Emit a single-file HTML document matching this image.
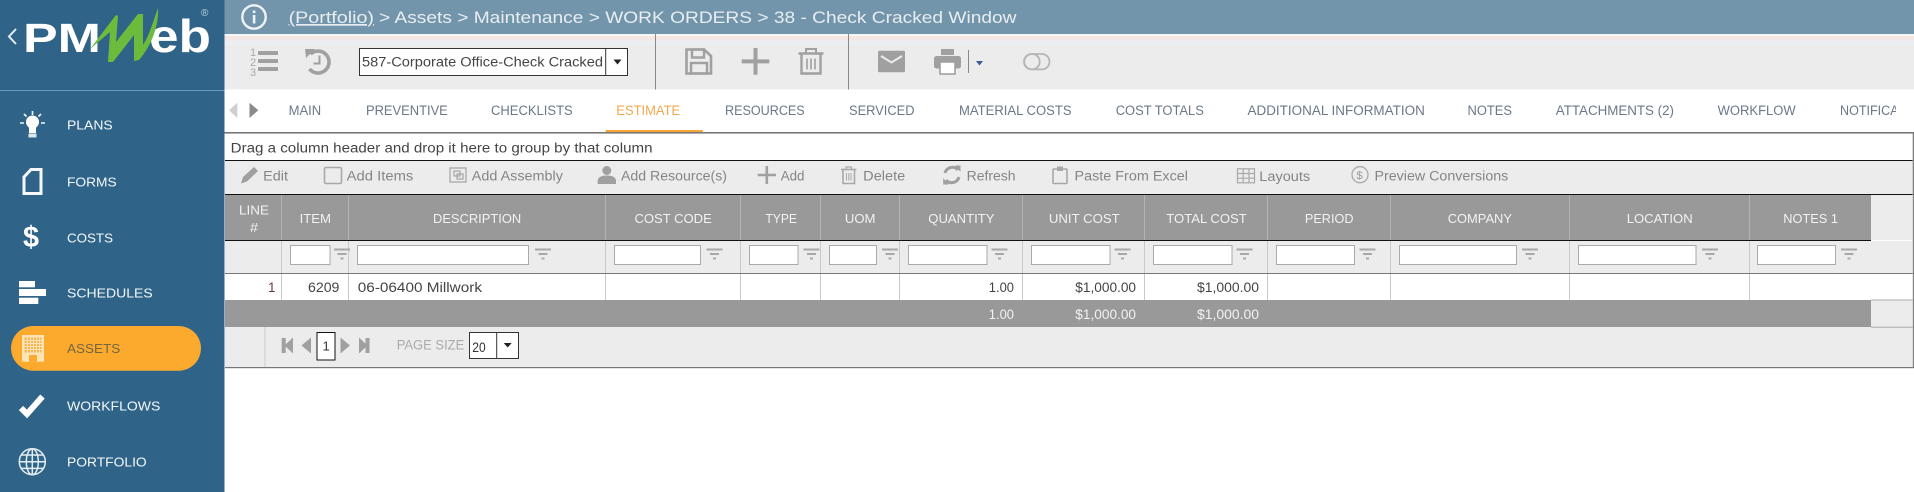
<!DOCTYPE html>
<html lang="en">
<head>
<meta charset="utf-8">
<title>PMWeb - Work Orders - Estimate</title>
<style>
html,body{margin:0;padding:0;width:1914px;height:492px;overflow:hidden;background:#fff}
svg{display:block;position:absolute;left:0;top:0}
text{font-family:"Liberation Sans",sans-serif;font-size:13.5px;white-space:pre}
.nav{fill:#f4f8fa;font-size:13px}
.tab{fill:#6a7888;font-size:13.5px}
.tb{fill:#858585;font-size:13.5px}
.h{fill:#f2f2f2;font-size:13px}
.d{fill:#444}
.ft{fill:#f2f2f2}
.in{fill:#fff;stroke:#aaa;stroke-width:1}
.dv{stroke:#c9c9c9;stroke-width:1}
.hv{stroke:#b4b4b4;stroke-width:1}
</style>
</head>
<body>
<svg width="1914" height="492" viewBox="0 0 1914 492" xmlns="http://www.w3.org/2000/svg">
<defs>
<g id="f" fill="#a8a8a8"><rect x="0" y="0" width="16" height="2"/><rect x="3.5" y="4.5" width="9" height="2"/><rect x="6.5" y="9" width="3" height="2"/></g>
<clipPath id="tabclip"><rect x="224" y="90" width="1672" height="42"/></clipPath>
</defs>

<!-- Sidebar -->
<rect x="0" y="0" width="224.5" height="492" fill="#2f6488"/>
<rect x="0" y="90" width="224.5" height="1" fill="#6a9dbd"/>
<path d="M16 29 L9 36.5 L16 44" fill="none" stroke="#e6eef3" stroke-width="2"/>
<text x="23" y="52" textLength="78" lengthAdjust="spacingAndGlyphs" style="font-size:41px;font-weight:bold;fill:#fff">PM</text>
<text x="149" y="52" textLength="62" lengthAdjust="spacingAndGlyphs" style="font-size:46px;font-weight:bold;fill:#fff">eb</text>
<path d="M90 49 L116 15 L118 16 L116 42 L138 14 L143 14 L143 45 C149 36 153 22 158 8 C159 25 152 45 139 60 L134 61 L134 35 L113 62 L108 62 L110 32 Z" fill="#6cbb3c"/>
<text x="201" y="16" style="font-size:10px;fill:#c4d4de">®</text>

<!-- Plans -->
<g fill="#fff"><circle cx="32.5" cy="122" r="6.5"/><rect x="29" y="126" width="7" height="7"/><rect x="28.5" y="133.5" width="8" height="4" fill="#dfe8ee"/></g>
<g stroke="#f2f6f8" stroke-width="1.6"><path d="M20 123h4M41 123h4M32.5 111v4M24 114l2.5 2.5M41 114l-2.5 2.5"/></g>
<text class="nav" x="67" y="129.3" textLength="45.7" lengthAdjust="spacingAndGlyphs">PLANS</text>
<!-- Forms -->
<path d="M31 169.5 H41 V193.5 H24 V177 Z" fill="none" stroke="#f4f8fa" stroke-width="3"/>
<text class="nav" x="67" y="186.3" textLength="49.7" lengthAdjust="spacingAndGlyphs">FORMS</text>
<!-- Costs -->
<text x="23" y="247" style="font-size:30px;font-weight:bold;fill:#fff" textLength="16" lengthAdjust="spacingAndGlyphs">$</text>
<text class="nav" x="67" y="242.3" textLength="46" lengthAdjust="spacingAndGlyphs">COSTS</text>
<!-- Schedules -->
<g fill="#fff"><rect x="19" y="281" width="16" height="6.3"/><rect x="19" y="289" width="27" height="7"/><rect x="19" y="297.7" width="19.3" height="6.3"/></g>
<text class="nav" x="67" y="297.3" textLength="85.7" lengthAdjust="spacingAndGlyphs">SCHEDULES</text>
<!-- Assets -->
<rect x="11" y="326" width="190" height="44.7" rx="22.3" fill="#fbaa2e"/>
<rect x="22" y="335" width="22" height="26.7" fill="#fde3b5"/>
<g fill="#f9b54f"><rect x="24.5" y="337.5" width="17" height="15"/><rect x="29" y="355" width="8" height="6.7" fill="#fbaa2e"/></g>
<g stroke="#fde3b5" stroke-width="1"><path d="M27.5 337v16M30.5 337v16M33.5 337v16M36.5 337v16M39.5 337v16M24 340.5h18M24 343.5h18M24 346.5h18M24 349.5h18"/></g>
<text x="67" y="353" textLength="53.3" lengthAdjust="spacingAndGlyphs" style="font-size:13px;fill:#75663f">ASSETS</text>
<!-- Workflows -->
<path d="M21 408 L27 414 L42.5 396.5" fill="none" stroke="#fff" stroke-width="6"/>
<text class="nav" x="67" y="410.3" textLength="93.3" lengthAdjust="spacingAndGlyphs">WORKFLOWS</text>
<!-- Portfolio -->
<g fill="none" stroke="#e4edf2" stroke-width="1.5"><circle cx="32.3" cy="461.7" r="13"/><ellipse cx="32.3" cy="461.7" rx="6" ry="13"/><path d="M32.3 448.7v26M19.3 461.7h26M21 455h22.6M21 468.4h22.6"/></g>
<text class="nav" x="67" y="466.4" textLength="79.7" lengthAdjust="spacingAndGlyphs">PORTFOLIO</text>

<!-- Top bar -->
<rect x="224.5" y="0" width="1690" height="34" fill="#7295ab"/>
<circle cx="254" cy="17" r="11.7" fill="none" stroke="#eef3f6" stroke-width="2.4"/>
<rect x="252.8" y="15" width="2.6" height="8.5" fill="#eef3f6"/><rect x="252.8" y="10.5" width="2.6" height="2.6" fill="#eef3f6"/>
<text x="288.6" y="23" textLength="85.4" lengthAdjust="spacingAndGlyphs" style="font-size:17px;fill:#e8eef2;text-decoration:underline">(Portfolio)</text>
<text x="379" y="23" textLength="637.5" lengthAdjust="spacingAndGlyphs" style="font-size:17px;fill:#e8eef2">&gt; Assets &gt; Maintenance &gt; WORK ORDERS &gt; 38 - Check Cracked Window</text>

<!-- Toolbar -->
<rect x="224.5" y="34" width="1690" height="55.5" fill="#ececec"/>
<rect x="224.5" y="34" width="1690" height="2" fill="#f6f6f6"/>
<rect x="224.5" y="36" width="1690" height="4.6" fill="#f4e8e4"/>
<rect x="224.5" y="40.6" width="1690" height="4.4" fill="#ebeef2"/>
<!-- list icon -->
<text x="250" y="56" style="font-size:11px;fill:#aaa">1</text><text x="250" y="66" style="font-size:11px;fill:#aaa">2</text><text x="250" y="76" style="font-size:11px;fill:#aaa">3</text>
<g fill="#a0a0a0"><rect x="258" y="51" width="20" height="4"/><rect x="258" y="59" width="20" height="4"/><rect x="258" y="67" width="20" height="4"/></g>
<!-- history icon -->
<path d="M310.5 54 A11 11 0 1 1 309.5 69" fill="none" stroke="#a0a0a0" stroke-width="3.6"/>
<path d="M305 49 L315 49 L306 58 Z" fill="#a0a0a0"/>
<path d="M319.5 55.5 V63.5 H313.5" fill="none" stroke="#a0a0a0" stroke-width="2"/>
<!-- select -->
<rect x="359.5" y="48.5" width="268" height="27" fill="#fff" stroke="#333"/>
<path d="M605.7 48.5 V75.5" stroke="#333"/>
<text x="362" y="66.5" textLength="241" lengthAdjust="spacingAndGlyphs" style="fill:#444">587-Corporate Office-Check Cracked</text>
<path d="M613.5 59.5 h8 l-4 5 z" fill="#222"/>
<rect x="655" y="34" width="1" height="55.5" fill="#888"/>
<rect x="848" y="34" width="1" height="55.5" fill="#888"/>
<!-- save -->
<path d="M686.5 49.5 H704 L711 56 V73.5 H686.5 Z" fill="none" stroke="#a0a0a0" stroke-width="2.6"/>
<rect x="692" y="49.5" width="12" height="8" fill="none" stroke="#a0a0a0" stroke-width="2.4"/>
<rect x="691" y="63" width="16" height="10.5" fill="none" stroke="#a0a0a0" stroke-width="2.4"/>
<!-- plus -->
<path d="M755.5 48 V74.7 M741.7 61.4 H769.3" stroke="#a0a0a0" stroke-width="4"/>
<!-- trash -->
<g fill="none" stroke="#a0a0a0"><path d="M798.5 53.5 H823.5" stroke-width="2.6"/><path d="M806 53 V49 H816 V53" stroke-width="2"/><path d="M801.5 54 V73.5 H820.5 V54" stroke-width="2.4"/><path d="M807 58.5 V69.5 M811 58.5 V69.5 M815 58.5 V69.5" stroke-width="1.6"/></g>
<!-- mail -->
<rect x="878" y="50.7" width="27" height="21.6" rx="1.5" fill="#a0a0a0"/>
<path d="M881 56 L891.5 62.5 L902 56" fill="none" stroke="#ececec" stroke-width="2"/>
<!-- printer -->
<rect x="941" y="49" width="13" height="6" fill="#a0a0a0"/>
<rect x="934" y="56" width="27" height="12.5" rx="2.5" fill="#a0a0a0"/>
<rect x="940" y="62" width="15" height="12" fill="#fff" stroke="#a0a0a0" stroke-width="1.6"/>
<rect x="968" y="50" width="1" height="23" fill="#888"/>
<path d="M976 61 h7 l-3.5 4.5 z" fill="#3a5a9a"/>
<!-- toggle -->
<g fill="none" stroke="#b5b5b5" stroke-width="1.8"><circle cx="1032" cy="61.7" r="7.7"/><rect x="1024" y="54" width="25.5" height="15.4" rx="7.7"/></g>

<!-- Tabs -->
<rect x="224.5" y="89.5" width="1690" height="42" fill="#fff"/>
<path d="M237.3 102.7 V118 L229 110.3 Z" fill="#cfcfcf"/>
<path d="M249.5 102.7 V118 L258.3 110.3 Z" fill="#8a8a8a"/>
<g clip-path="url(#tabclip)">
<text class="tab" x="288.6" y="115.2" textLength="32.6" lengthAdjust="spacingAndGlyphs">MAIN</text>
<text class="tab" x="366" y="115.2" textLength="81.8" lengthAdjust="spacingAndGlyphs">PREVENTIVE</text>
<text class="tab" x="491" y="115.2" textLength="81.7" lengthAdjust="spacingAndGlyphs">CHECKLISTS</text>
<text x="616.3" y="115.2" textLength="63.9" lengthAdjust="spacingAndGlyphs" style="fill:#f0a94e">ESTIMATE</text>
<text class="tab" x="725" y="115.2" textLength="79.7" lengthAdjust="spacingAndGlyphs">RESOURCES</text>
<text class="tab" x="849" y="115.2" textLength="65.5" lengthAdjust="spacingAndGlyphs">SERVICED</text>
<text class="tab" x="959" y="115.2" textLength="112.6" lengthAdjust="spacingAndGlyphs">MATERIAL COSTS</text>
<text class="tab" x="1115.7" y="115.2" textLength="88.2" lengthAdjust="spacingAndGlyphs">COST TOTALS</text>
<text class="tab" x="1247.5" y="115.2" textLength="177.3" lengthAdjust="spacingAndGlyphs">ADDITIONAL INFORMATION</text>
<text class="tab" x="1467.5" y="115.2" textLength="44.5" lengthAdjust="spacingAndGlyphs">NOTES</text>
<text class="tab" x="1555.8" y="115.2" textLength="118.2" lengthAdjust="spacingAndGlyphs">ATTACHMENTS (2)</text>
<text class="tab" x="1717.6" y="115.2" textLength="78.1" lengthAdjust="spacingAndGlyphs">WORKFLOW</text>
<text class="tab" x="1840" y="115.2" textLength="96" lengthAdjust="spacingAndGlyphs">NOTIFICATIONS</text>
</g>
<rect x="605.7" y="130" width="97" height="2.5" fill="#f7a535"/>
<rect x="224.5" y="132" width="1690" height="1.6" fill="#777"/>

<!-- Grid frame -->
<rect x="1912.7" y="133" width="1.2" height="235" fill="#777"/>
<text x="230.7" y="152.5" textLength="421.8" lengthAdjust="spacingAndGlyphs" style="fill:#444">Drag a column header and drop it here to group by that column</text>
<rect x="225" y="160" width="1687.5" height="1" fill="#111"/>

<!-- Grid toolbar -->
<rect x="225" y="161" width="1687.5" height="33" fill="#ececec"/>
<rect x="225" y="194" width="1687.5" height="1" fill="#111"/>
<path d="M241 183.5 L243 177 L254 167 L258 171 L247 181.5 Z" fill="#a0a0a0"/>
<rect x="324.5" y="167.5" width="17" height="16" rx="1.5" fill="none" stroke="#a8a8a8" stroke-width="1.6"/>
<g fill="none" stroke="#a8a8a8" stroke-width="1.3"><rect x="450" y="168" width="16" height="14"/><rect x="454" y="171" width="6" height="5"/><rect x="457" y="174" width="6" height="5"/></g>
<circle cx="606.8" cy="170.5" r="4.5" fill="#a0a0a0"/><path d="M597.7 184 V180 Q599 175.5 606.8 175.5 Q614.7 175.5 616 180 V184 Z" fill="#a0a0a0"/>
<path d="M766.8 166 V184 M757.7 175 H776" stroke="#a0a0a0" stroke-width="2.6"/>
<g fill="none" stroke="#a8a8a8"><path d="M841 169.5 H856.4" stroke-width="1.6"/><path d="M846 169 V167 H851.5 V169" stroke-width="1.2"/><path d="M843 170 V183.5 H854.5 V170" stroke-width="1.6"/><path d="M846.5 173 V180.5 M848.8 173 V180.5 M851 173 V180.5" stroke-width="1"/></g>
<g fill="none" stroke="#a0a0a0" stroke-width="3"><path d="M945 173 A7.5 7.5 0 0 1 958 170"/><path d="M959 177 A7.5 7.5 0 0 1 946 180"/></g>
<path d="M955 165.5 L960.5 165.5 L960.5 172 Z M949 184.5 L943.2 184.5 L943.2 178 Z" fill="#a0a0a0"/>
<rect x="1053" y="169" width="14" height="14.5" rx="1" fill="none" stroke="#a8a8a8" stroke-width="1.6"/><rect x="1057" y="166.5" width="6" height="4.5" fill="#a8a8a8"/>
<g fill="none" stroke="#a8a8a8" stroke-width="1.2"><rect x="1237.5" y="168.8" width="17" height="14"/><path d="M1243.2 168.8v14M1249 168.8v14M1237.5 173.5h17M1237.5 178.2h17"/></g>
<circle cx="1360" cy="174.7" r="8" fill="none" stroke="#aaa" stroke-width="1.3"/><text x="1356.5" y="179" style="font-size:11px;fill:#999">$</text>
<text class="tb" x="263.2" y="180.5" textLength="24.8" lengthAdjust="spacingAndGlyphs">Edit</text>
<text class="tb" x="346.7" y="180.5" textLength="66.6" lengthAdjust="spacingAndGlyphs">Add Items</text>
<text class="tb" x="471.8" y="180.5" textLength="91.1" lengthAdjust="spacingAndGlyphs">Add Assembly</text>
<text class="tb" x="621" y="180.5" textLength="106" lengthAdjust="spacingAndGlyphs">Add Resource(s)</text>
<text class="tb" x="780.7" y="180.5" textLength="23.7" lengthAdjust="spacingAndGlyphs">Add</text>
<text class="tb" x="863.2" y="180.5" textLength="42.1" lengthAdjust="spacingAndGlyphs">Delete</text>
<text class="tb" x="966.6" y="180.5" textLength="49" lengthAdjust="spacingAndGlyphs">Refresh</text>
<text class="tb" x="1074.5" y="180.5" textLength="113.5" lengthAdjust="spacingAndGlyphs">Paste From Excel</text>
<text class="tb" x="1259.3" y="181" textLength="50.9" lengthAdjust="spacingAndGlyphs">Layouts</text>
<text class="tb" x="1374.5" y="180.5" textLength="133.8" lengthAdjust="spacingAndGlyphs">Preview Conversions</text>

<!-- Header row -->
<rect x="1871" y="195" width="41.7" height="45" fill="#ececec"/>
<rect x="225" y="195" width="1646" height="45" fill="#999"/>
<path class="hv" d="M281.5 195V240M348.5 195V240M605.5 195V240M740.5 195V240M820.5 195V240M899.5 195V240M1022.5 195V240M1144.5 195V240M1267.5 195V240M1390.5 195V240M1569.5 195V240M1749.5 195V240"/>
<text class="h" x="239" y="214.7" textLength="30" lengthAdjust="spacingAndGlyphs">LINE</text>
<text class="h" x="250" y="232" textLength="8" lengthAdjust="spacingAndGlyphs">#</text>
<text class="h" x="299.6" y="223" textLength="31.4" lengthAdjust="spacingAndGlyphs">ITEM</text>
<text class="h" x="433" y="223" textLength="88.2" lengthAdjust="spacingAndGlyphs">DESCRIPTION</text>
<text class="h" x="634.5" y="223" textLength="77.3" lengthAdjust="spacingAndGlyphs">COST CODE</text>
<text class="h" x="765.4" y="223" textLength="31.6" lengthAdjust="spacingAndGlyphs">TYPE</text>
<text class="h" x="844.9" y="223" textLength="30.6" lengthAdjust="spacingAndGlyphs">UOM</text>
<text class="h" x="928.3" y="223" textLength="66.2" lengthAdjust="spacingAndGlyphs">QUANTITY</text>
<text class="h" x="1048.9" y="223" textLength="70.8" lengthAdjust="spacingAndGlyphs">UNIT COST</text>
<text class="h" x="1166.3" y="223" textLength="80.4" lengthAdjust="spacingAndGlyphs">TOTAL COST</text>
<text class="h" x="1304.9" y="223" textLength="48.6" lengthAdjust="spacingAndGlyphs">PERIOD</text>
<text class="h" x="1447.7" y="223" textLength="64.3" lengthAdjust="spacingAndGlyphs">COMPANY</text>
<text class="h" x="1626.7" y="223" textLength="66" lengthAdjust="spacingAndGlyphs">LOCATION</text>
<text class="h" x="1783.3" y="223" textLength="54.7" lengthAdjust="spacingAndGlyphs">NOTES 1</text>
<rect x="225" y="240" width="1646" height="1" fill="#111"/>

<!-- Filter row -->
<rect x="225" y="241" width="1687.7" height="32" fill="#ececec"/>
<path class="dv" d="M281.5 241V273M348.5 241V273M605.5 241V273M740.5 241V273M820.5 241V273M899.5 241V273M1022.5 241V273M1144.5 241V273M1267.5 241V273M1390.5 241V273M1569.5 241V273M1749.5 241V273"/>
<rect class="in" x="290.5" y="245.5" width="39.5" height="19"/>
<rect class="in" x="357.5" y="245.5" width="171" height="19"/>
<rect class="in" x="614.5" y="245.5" width="86" height="19"/>
<rect class="in" x="749.5" y="245.5" width="48.5" height="19"/>
<rect class="in" x="829.5" y="245.5" width="47" height="19"/>
<rect class="in" x="908.5" y="245.5" width="78.5" height="19"/>
<rect class="in" x="1031.5" y="245.5" width="78.5" height="19"/>
<rect class="in" x="1153.5" y="245.5" width="78.5" height="19"/>
<rect class="in" x="1276.5" y="245.5" width="78" height="19"/>
<rect class="in" x="1399.5" y="245.5" width="117" height="19"/>
<rect class="in" x="1578.5" y="245.5" width="117.5" height="19"/>
<rect class="in" x="1757.5" y="245.5" width="78" height="19"/>
<use href="#f" x="334" y="248.5"/><use href="#f" x="535" y="248.5"/><use href="#f" x="706.5" y="248.5"/><use href="#f" x="803.5" y="248.5"/><use href="#f" x="882" y="248.5"/><use href="#f" x="991.5" y="248.5"/><use href="#f" x="1114.5" y="248.5"/><use href="#f" x="1236.5" y="248.5"/><use href="#f" x="1359.5" y="248.5"/><use href="#f" x="1522" y="248.5"/><use href="#f" x="1702" y="248.5"/><use href="#f" x="1841" y="248.5"/>
<rect x="225" y="273" width="1687.7" height="1" fill="#777"/>

<!-- Data row -->
<rect x="225" y="274" width="1687.7" height="26" fill="#fff"/>
<path class="dv" d="M281.5 274V300M348.5 274V300M605.5 274V300M740.5 274V300M820.5 274V300M899.5 274V300M1022.5 274V300M1144.5 274V300M1267.5 274V300M1390.5 274V300M1569.5 274V300M1749.5 274V300"/>
<text x="268" y="292" style="fill:#6a3a3a">1</text>
<text class="d" x="308" y="292" textLength="31.4" lengthAdjust="spacingAndGlyphs">6209</text>
<text class="d" x="357.8" y="292" textLength="124.2" lengthAdjust="spacingAndGlyphs">06-06400 Millwork</text>
<text class="d" x="988.8" y="292" textLength="25.2" lengthAdjust="spacingAndGlyphs">1.00</text>
<text class="d" x="1075.3" y="292" textLength="60.7" lengthAdjust="spacingAndGlyphs">$1,000.00</text>
<text class="d" x="1197" y="292" textLength="62" lengthAdjust="spacingAndGlyphs">$1,000.00</text>

<!-- Footer row -->
<rect x="225" y="300" width="1687.7" height="27" fill="#ececec"/>
<rect x="1871" y="299.5" width="41.7" height="1" fill="#aaa"/>
<rect x="225" y="300" width="1646" height="27" fill="#999"/>
<text class="ft" x="988.8" y="319" textLength="25.2" lengthAdjust="spacingAndGlyphs">1.00</text>
<text class="ft" x="1075.3" y="319" textLength="60.7" lengthAdjust="spacingAndGlyphs">$1,000.00</text>
<text class="ft" x="1197" y="319" textLength="62" lengthAdjust="spacingAndGlyphs">$1,000.00</text>

<!-- Pager -->
<rect x="225" y="327" width="1687.7" height="40" fill="#ececec"/>
<rect x="1871" y="326.7" width="41.7" height="1" fill="#aaa"/>
<rect x="264.5" y="327" width="1" height="40" fill="#ccc"/>
<rect x="225" y="367" width="1689" height="1.2" fill="#777"/>
<rect x="281.7" y="338" width="4" height="15" fill="#a0a0a0"/><path d="M293 337.5 V353.5 L284.5 345.5 Z" fill="#a0a0a0"/>
<path d="M311 337.5 V353.5 L301.5 345.5 Z" fill="#a0a0a0"/>
<rect x="317" y="332.5" width="18" height="27.5" fill="#fff" stroke="#111"/>
<text x="322.5" y="350.5" style="font-size:13px;fill:#333">1</text>
<path d="M340.5 337.5 V353.5 L350 345.5 Z" fill="#a0a0a0"/>
<path d="M359 337.5 V353.5 L367.5 345.5 Z" fill="#a0a0a0"/><rect x="365.5" y="338" width="4" height="15" fill="#a0a0a0"/>
<text x="396.7" y="349.5" textLength="67.6" lengthAdjust="spacingAndGlyphs" style="fill:#aaa">PAGE SIZE</text>
<rect x="469.5" y="332.5" width="49" height="26" fill="#fff" stroke="#333"/>
<path d="M496.7 332.5 V358.5" stroke="#333"/>
<text x="472.3" y="352" textLength="13.4" lengthAdjust="spacingAndGlyphs" style="fill:#333">20</text>
<path d="M503.7 343 h8 l-4 4.5 z" fill="#222"/>
</svg>
</body>
</html>
